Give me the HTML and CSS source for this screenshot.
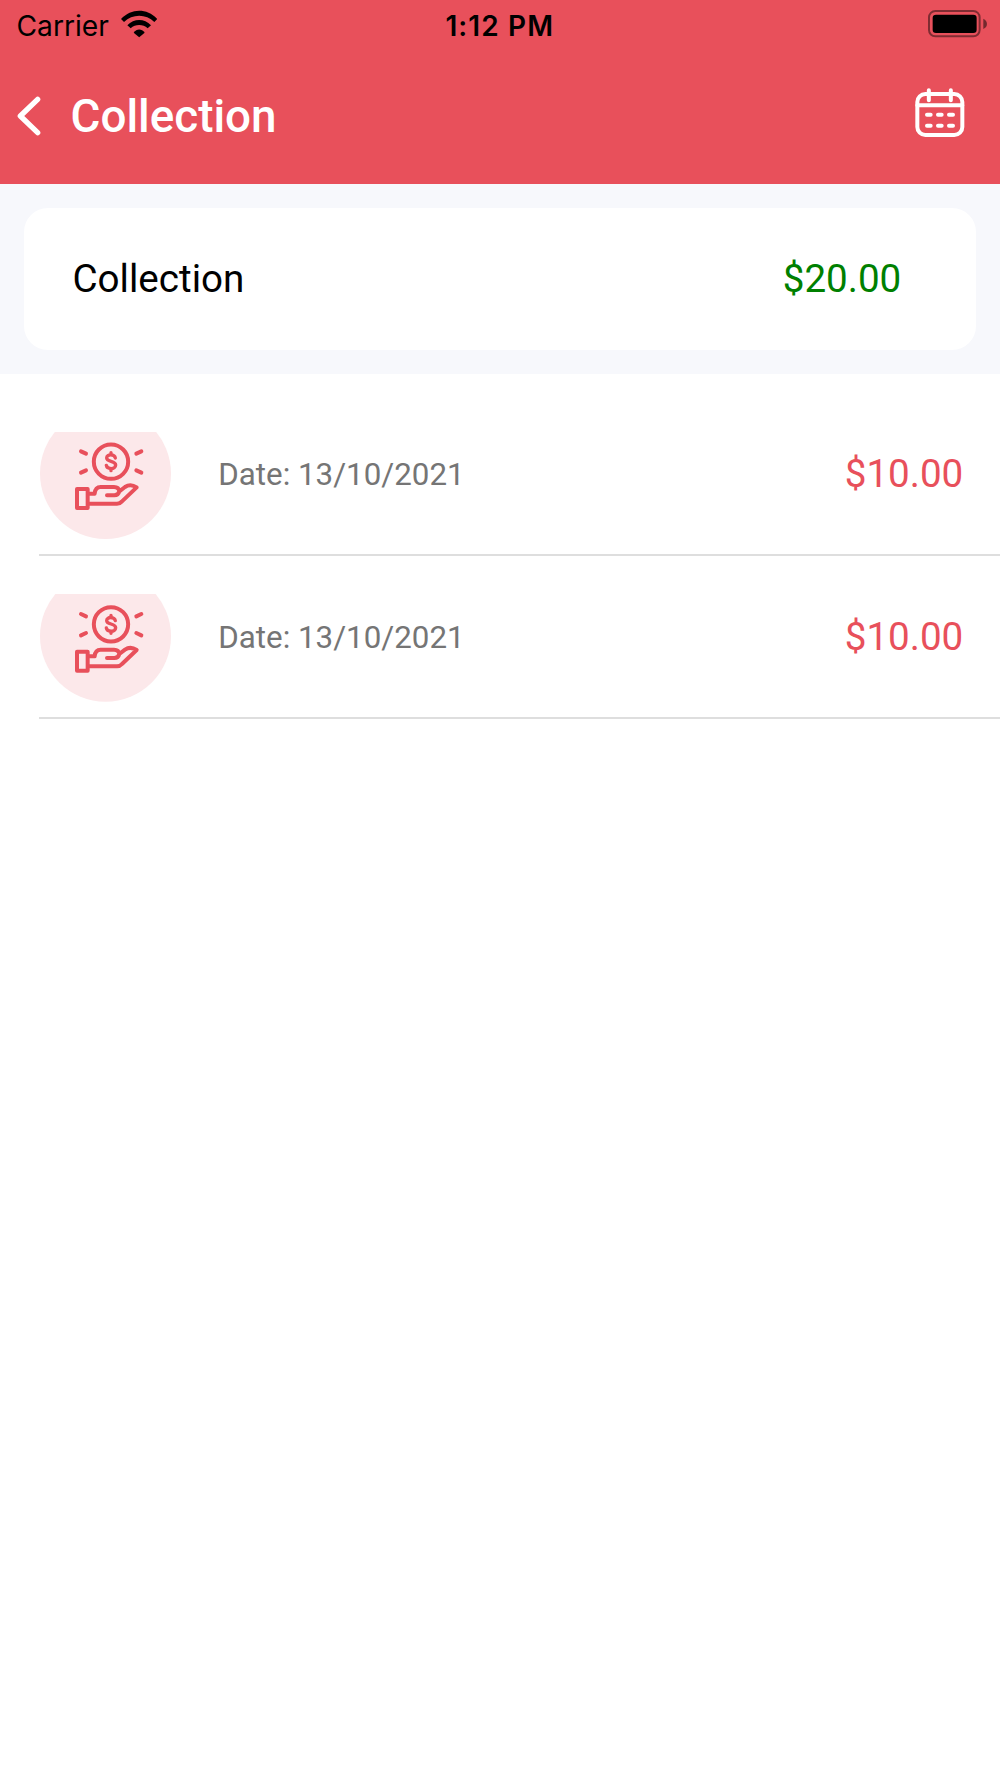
FILE: index.html
```html
<!DOCTYPE html>
<html lang="en">
<head>
<meta charset="utf-8">
<title>Collection</title>
<link rel="stylesheet" href="styles.css">
</head>
<body>
<header class="header">
  <div class="status">
    <div class="status-left">
      <span class="carrier">Carrier</span>
      <svg class="wifi" viewBox="361 29 110 84">
        <path d="M361 56C392 23 439 23 470 56L461 65C436 40 395 40 370 65Z"/>
        <path d="M380 75C400 54 431 54 451 75L441 84C427 71 404 71 390 84Z"/>
        <path d="M399 97C408 84 423 84 432 97L415.500 111Z"/>
      </svg>
    </div>
    <span class="time">1:12 PM</span>
    <svg class="battery" viewBox="145 31 178 83">
      <rect class="battery-frame" x="148" y="34" width="152" height="76" rx="19"/>
      <rect x="159" y="45" width="132" height="55" rx="10"/>
      <path class="battery-cap" d="M311 57Q322 63 322 73Q322 83 311 88Z"/>
    </svg>
  </div>
  <nav class="navbar">
    <svg class="back" viewBox="51 288 72 120"><path d="M113 298L61 348L113 398"/></svg>
    <h1 class="title">Collection</h1>
    <svg class="calendar" viewBox="104 264 150 150">
      <rect x="111" y="282" width="135" height="123" rx="24"/>
      <path d="M111 315.500H246M145.500 271V301M211.500 271V301"/>
      <path class="days" d="M140 344H151M173 344H184M206 344H218M140 377H151M173 377H184M206 377H218"/>
    </svg>
  </nav>
</header>
<section class="summary">
  <div class="card">
    <span class="card-label">Collection</span>
    <span class="card-amount">$20.00</span>
  </div>
</section>
<svg class="defs" width="0" height="0">
  <defs>
    <g id="payment">
      <circle class="disc" cx="226.500" cy="160.500" r="196.500"/>
      <g class="lines">
        <circle cx="243" cy="125" r="51.500"/>
        <path d="M153 94L168 101M153 158L168 151M334 94L319 101M334 158L319 151"/>
        <path class="dollar" d="M256 114C254 102 230 101 230 114C230 127 257 121 257 135C257 149 231 149 229 136M243 98V104M243 146V152"/>
        <path d="M141 207H173V264H141ZM173 221H194C195 207 202 201 212 201H252C263 201 267 205 268 214C266 222 261 226 253 226H231M268 214L285 201C298 192 311 196 320 202L276 244Q270 251 261 251H173"/>
      </g>
    </g>
  </defs>
</svg>
<main class="list">
  <article class="row">
    <svg class="icon" viewBox="30 36 396 324"><use href="#payment"/></svg>
    <span class="date">Date: 13/10/2021</span>
    <span class="amount">$10.00</span>
  </article>
  <article class="row">
    <svg class="icon" viewBox="30 34 396 324"><use href="#payment"/></svg>
    <span class="date">Date: 13/10/2021</span>
    <span class="amount">$10.00</span>
  </article>
</main>
</body>
</html>
```
FILE: styles.css
```css
* { box-sizing: border-box; }
body { margin: 0; min-height: 1778px; background: #fff; color: #000; font-family: Roboto, sans-serif; }
svg { display: block; flex: none; }
.header { height: 183.500px; background: #e8505b; }
.status { height: 50px; display: grid; grid-template-columns: 1fr auto 1fr; padding: 0 13px 0 16.500px; font-family: Inter, sans-serif; line-height: 52px; }
.status-left { display: flex; }
.carrier { width: 104px; font-size: 28.200px; }
.wifi { width: 36.700px; height: 28px; margin-top: 9.700px; }
.time { margin-left: -4px; font-size: 28px; font-weight: 600; letter-spacing: 1.100px; }
.battery { width: 59.300px; height: 27.700px; margin-top: 10.400px; justify-self: end; }
.battery-frame { fill: none; stroke: #000; stroke-opacity: .45; stroke-width: 6; }
.battery-cap { opacity: .5; }
.navbar { height: 131px; display: flex; align-items: center; padding: 0 35.400px 0 17px; }
.back { width: 24px; height: 40px; margin-top: 1px; fill: none; stroke: #fff; stroke-width: 16; stroke-linecap: round; stroke-linejoin: round; }
.title { margin: 2px auto 0 29.500px; color: #fff; font-size: 45.800px; font-weight: 500; line-height: 54px; }
.calendar { width: 50px; height: 50px; margin-bottom: 5px; fill: none; stroke: #fff; stroke-width: 12; stroke-linecap: round; }
.summary { height: 190.500px; padding: 24px; background: #f7f8fc; }
.card { height: 142.500px; display: flex; align-items: center; justify-content: space-between; padding: 0 74.700px 0 48.500px; border-radius: 24px; background: #fff; font-size: 38.600px; }
.defs { position: absolute; }
.card-amount { color: #008000; }
.disc { fill: #fce8ea; }
.lines { fill: none; stroke: #e8505b; stroke-width: 12; stroke-linecap: round; stroke-linejoin: round; }
.dollar { stroke-width: 10; }
.list { padding: 19px 0 0 38.700px; }
.row { height: 163px; display: flex; align-items: center; padding: 0 36.700px 0 1.300px; box-shadow: inset 0 -2px #dedede; }
.icon { width: 132px; height: 108px; margin-top: 23px; }
.row + .row .icon { margin-top: 21px; }
.date { margin: 0 auto 0 46.300px; color: #757575; font-size: 31.300px; }
.row + .row .date { margin-top: -1px; }
.amount { margin-top: -2px; color: #e8505b; font-size: 38.600px; }
```
